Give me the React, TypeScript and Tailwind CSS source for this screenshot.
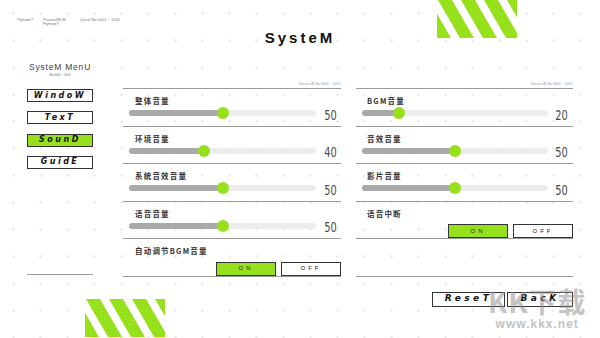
import React from "react";

const GREEN = "#97e01c";

function Stripes() {
  const ks = [-2, -1, 0, 1, 2, 3];
  return (
    <svg width="80" height="38" viewBox="0 0 80 38">
      {ks.map((k) => {
        const x = 1 + k * 23;
        return (
          <polygon
            key={k}
            points={`${x},0 ${x + 14},0 ${x + 36},38 ${x + 22},38`}
            fill={GREEN}
          />
        );
      })}
    </svg>
  );
}

function Label({ text, right }: { text: string; right?: boolean }) {
  return (
    <div
      className={`mt-[7px] h-[10px] leading-[10px] text-[7.5px] font-bold tracking-[1.2px] text-[#333] whitespace-nowrap ${
        right ? "pl-[11px]" : "pl-[12px]"
      }`}
      style={{ fontFamily: '"Noto Sans CJK SC", sans-serif' }}
    >
      {text}
    </div>
  );
}

function Slider({ label, value, right }: { label: string; value: number; right?: boolean }) {
  return (
    <div className="h-[37.5px] border-b border-[#9a9a9a] flex flex-col">
      <Label text={label} right={right} />
      <div className="mt-[1px] h-[12px] flex items-center">
        <div className={`relative ml-[6px] h-[6px] rounded-full bg-[#ececec] ${right ? "w-[186px]" : "w-[187px]"}`}>
          <div className="h-full rounded-full bg-[#a9a9a9]" style={{ width: `${value}%` }} />
          <div
            className="absolute top-[-3px] w-[12px] h-[12px] rounded-full bg-[#97e01c] -translate-x-1/2"
            style={{ left: `${value}%` }}
          />
        </div>
        <div className={`flex-1 flex justify-end mt-[3px] ${right ? "pr-[5px]" : "pr-[4px]"}`}>
          <span
            className="block text-[14px] leading-[12px] text-[#4a4a4a] scale-x-[0.7] origin-right"
            style={{ fontFamily: '"DejaVu Sans", sans-serif', fontWeight: 400 }}
          >
            {value}
          </span>
        </div>
      </div>
    </div>
  );
}

function Toggle({ label, right }: { label: string; right?: boolean }) {
  return (
    <div className="h-[37.5px] border-b border-[#9a9a9a] flex flex-col">
      <Label text={label} right={right} />
      <div className="mt-auto flex justify-end gap-[5px]">
        <div className="w-[60px] h-[14px] border border-[#333] bg-[#97e01c] flex items-center justify-center text-[6px] tracking-[3px] text-[#222]">
          ON
        </div>
        <div className="w-[60px] h-[14px] border border-[#333] bg-white flex items-center justify-center text-[6px] tracking-[3px] text-[#222]">
          OFF
        </div>
      </div>
    </div>
  );
}

function MenuButton({ label, active }: { label: string; active?: boolean }) {
  return (
    <div
      className={`h-[13px] border border-[#333] flex items-center justify-center text-[8px] font-bold italic tracking-[2.5px] text-[#111] ${
        active ? "bg-[#97e01c]" : "bg-white"
      }`}
      style={{ fontFamily: '"DejaVu Sans", sans-serif' }}
    >
      {label}
    </div>
  );
}

function ColHeader() {
  return (
    <div className="h-[7px] text-right text-[3px] leading-[7px] text-[#888] tracking-[0.3px]">
      SeriousW No.0001 ~ 0011
    </div>
  );
}

export default function App() {
  return (
    <div
      className="relative w-[600px] h-[338px] overflow-hidden bg-white bg-[radial-gradient(circle,#ececec_1px,transparent_1.5px)] bg-size-[27px_27px]"
      style={{ fontFamily: '"Liberation Sans", "Noto Sans CJK SC", sans-serif' }}
    >
      <div className="absolute top-0 left-[437px]">
        <Stripes />
      </div>
      <div className="absolute top-[299px] left-[85px]">
        <Stripes />
      </div>

      <div className="flex flex-col h-full">
        <div className="h-[26px] pt-[18px] pl-[17px] flex gap-[10px] text-[4px] leading-[4px] text-[#777]">
          <div>Tlymwe?</div>
          <div className="flex flex-col">
            <span>PraseeSS BI</span>
            <span>Flymwe?</span>
          </div>
          <div className="ml-[4px]">Quick No.0001 ~ 1010</div>
        </div>
        <div className="h-[24px] leading-[24px] text-center text-[15px] font-bold tracking-[3px] text-[#111]">
          SysteM
        </div>

        <div className="flex">
          <div className="ml-[27px] w-[66px] flex flex-col">
            <div className="mt-[12px] h-[10px] leading-[10px] text-center text-[8.5px] tracking-[0.8px] text-[#444] whitespace-nowrap">
              SysteM MenU
            </div>
            <div className="mt-[1px] h-[5px] leading-[5px] text-center text-[3px] text-[#666]">
              No.0001 ~ 0011
            </div>
            <div className="mt-[11px] flex flex-col gap-[9.3px]">
              <MenuButton label="WindoW" />
              <MenuButton label="TexT" />
              <MenuButton label="SounD" active />
              <MenuButton label="GuidE" />
            </div>
            <div className="mt-[105px] border-b border-[#9a9a9a]" />
          </div>

          <div className="ml-[30px] w-[450px] flex flex-col pt-[31px]">
            <div className="flex gap-[15px]">
              <div className="w-[218px]">
                <ColHeader />
                <div className="border-t border-[#9a9a9a]">
                  <Slider label="整体音量" value={50} />
                  <Slider label="环境音量" value={40} />
                  <Slider label="系统音效音量" value={50} />
                  <Slider label="语音音量" value={50} />
                  <Toggle label="自动调节BGM音量" />
                </div>
              </div>
              <div className="w-[217px]">
                <ColHeader />
                <div className="border-t border-[#9a9a9a]">
                  <Slider label="BGM音量" value={20} right />
                  <Slider label="音效音量" value={50} right />
                  <Slider label="影片音量" value={50} right />
                  <Toggle label="语音中断" right />
                  <div className="h-[37.5px] border-b border-[#9a9a9a]" />
                </div>
              </div>
            </div>
            <div className="mt-[15px] flex justify-end gap-[2px]">
              <div
                className="w-[73px] h-[15px] border border-[#333] bg-white flex items-center justify-center text-[9px] font-bold italic tracking-[3.5px] text-[#111]"
                style={{ fontFamily: '"DejaVu Sans", sans-serif' }}
              >
                ReseT
              </div>
              <div
                className="w-[66px] h-[15px] border border-[#333] bg-white flex items-center justify-center text-[9px] font-bold italic tracking-[3.5px] text-[#111]"
                style={{ fontFamily: '"DejaVu Sans", sans-serif' }}
              >
                BacK
              </div>
            </div>
          </div>
        </div>
      </div>

      <div className="absolute left-[488px] top-[285px] flex flex-col items-center pointer-events-none">
        <div
          className="text-[28px] leading-[32px] font-bold text-[#8a8a8a] opacity-50 tracking-[1px]"
          style={{ fontFamily: '"Noto Sans CJK SC", sans-serif' }}
        >
          KK下载
        </div>
        <div className="text-[12px] leading-[14px] font-bold text-[#9a9a9a] opacity-60 tracking-[1px]">
          www.kkx.net
        </div>
      </div>
    </div>
  );
}
